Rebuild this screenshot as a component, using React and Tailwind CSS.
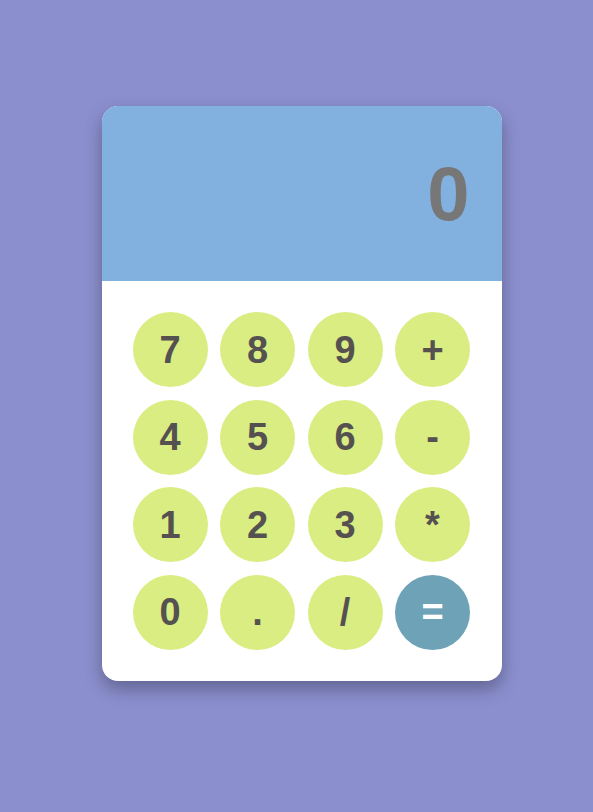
export default function App() {
  const keys = ["7", "8", "9", "+", "4", "5", "6", "-", "1", "2", "3", "*", "0", ".", "/", "="];
  return (
    <div className="min-h-screen w-full bg-[#8b8fce] flex justify-center pt-[106px] pl-[10px]" style={{ fontFamily: '"Liberation Sans", Arial, sans-serif' }}>
      <div className="w-[400px] h-[575px] rounded-[16px] overflow-hidden bg-white shadow-[0_8px_18px_rgba(0,0,0,0.3)] flex flex-col">
        <div className="h-[175px] bg-[#82b1e0] flex items-center justify-end pr-[32px]">
          <span className="text-[76px] font-bold text-[#777777] leading-none">0</span>
        </div>
        <div className="flex-1 pt-[31px] pl-[31px] grid grid-cols-[repeat(4,75px)] auto-rows-[75px] gap-[12.5px] content-start">
          {keys.map((k) => (
            <div
              key={k}
              className={
                k === "="
                  ? "w-[75px] h-[75px] rounded-full bg-[#6ea3b7] text-white flex items-center justify-center pt-px text-[38px] font-bold"
                  : "w-[75px] h-[75px] rounded-full bg-[#d9ed82] text-[#555151] flex items-center justify-center pt-px text-[38px] font-bold"
              }
            >
              {k}
            </div>
          ))}
        </div>
      </div>
    </div>
  );
}
